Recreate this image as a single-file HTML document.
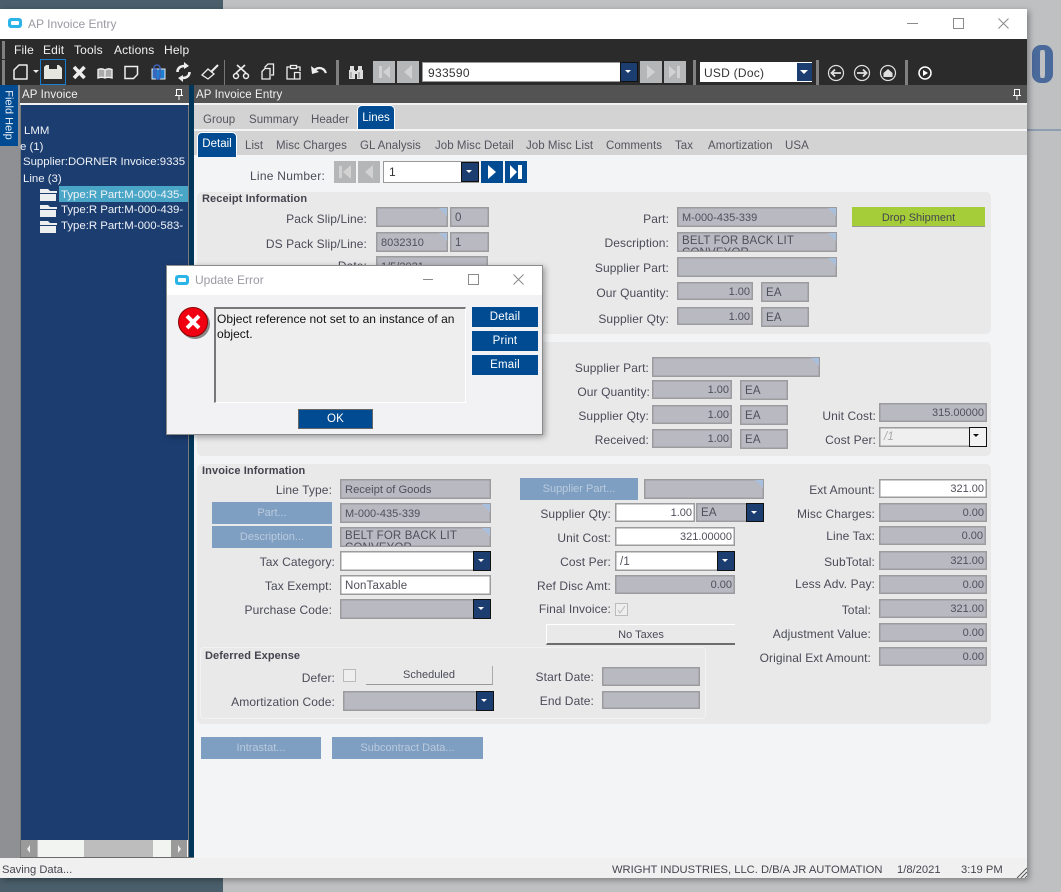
<!DOCTYPE html>
<html><head><meta charset="utf-8"><title>AP Invoice Entry</title>
<style>
html,body{margin:0;padding:0}
body{width:1061px;height:892px;position:relative;overflow:hidden;background:#bfc0c2;font:12px "Liberation Sans",sans-serif;color:#4b4b58}
div,span,svg{position:absolute}
.l,.f,.b,.t,.h{white-space:nowrap}
.l{line-height:16px;color:#4b4b58;letter-spacing:.1px}
.f{box-sizing:border-box;background:#b9b9c2;border:1px solid #9c9c9f;box-shadow:inset 0 0 0 .5px #9c9c9f;padding:0 4px;color:#50505c;line-height:20px;overflow:hidden;font-size:11.5px;letter-spacing:.15px}
.r{text-align:right;font-size:11px;letter-spacing:0;padding-right:2px}
.s{font-size:11px;letter-spacing:0}
.m{white-space:normal;line-height:12px;padding-top:2px}
.w{background:#fff}
.c::after{content:"";position:absolute;right:-1px;top:-1px;border-style:solid;border-width:0 10px 10px 0;border-color:transparent #a9c0dd transparent transparent}
.b{box-sizing:border-box;background:#004b91;color:#fff;text-align:center;letter-spacing:.2px;font-size:11.5px}
.d{background:#7f9fc2;color:#b9cade;text-align:center;box-sizing:border-box;font-size:11px;white-space:nowrap}
.dd{box-sizing:border-box;background:#1c3d70;border:1.5px solid #111;width:18px;height:20px}
.dd::after{content:"";position:absolute;left:4px;top:7px;border-style:solid;border-width:3px 3.5px 0;border-color:#fff transparent transparent}
.p{background:#e9e9ea;border-radius:5px}
.h{font-weight:bold;font-size:11px;color:#44444e;line-height:14px;letter-spacing:.1px}
.t{line-height:16px;color:#55555f;font-size:11.5px;letter-spacing:.05px}
.tree{color:#eef1f6;font-size:11.4px;line-height:16px;white-space:nowrap}
.n{width:22px;height:22px;background:#b5b6b8}
.na{width:22px;height:22px;background:#004b91}
.sep{width:3px;background:#808080}
.st{top:862px;font-size:11.2px;line-height:16px;color:#45454f;white-space:nowrap}
</style></head><body>

<!-- desktop background -->
<div style="left:0;top:0;width:223px;height:892px;background:#4a5f6b"></div>
<div style="left:223px;top:0;width:838px;height:892px;background:#bfc0c2"></div>
<div style="left:1027px;top:129px;width:34px;height:2px;background:#8f9db3"></div>
<div style="left:1032px;top:45px;width:5px;height:28px;border:solid #4a6a9c;border-width:5px 8px;border-radius:9px"></div>

<!-- window -->
<div style="left:0;top:9px;width:1027px;height:869px;background:#f3f4f6;box-shadow:2px 2px 6px rgba(0,0,0,.35)"></div>
<div style="left:0;top:9px;width:1027px;height:30px;background:#fff"></div>
<div style="left:8px;top:18px;width:14px;height:10px;background:#2ab4e8;border-radius:3px"></div>
<div style="left:11px;top:21px;width:8px;height:4px;background:#fff;border-radius:1px"></div>
<div style="left:28px;top:16px;line-height:16px;color:#9a9aa2">AP Invoice Entry</div>
<div style="left:907px;top:23px;width:11px;height:1px;background:#8a8a8a"></div>
<div style="left:953px;top:18px;width:9px;height:9px;border:1px solid #8a8a8a"></div>
<svg style="left:998px;top:18px" width="11" height="11"><path d="M.5.5l10 10M10.500.5l-10 10" stroke="#8a8a8a" fill="none"/></svg>

<!-- menu + toolbar -->
<div style="left:0;top:39px;width:1027px;height:46px;background:#2b2b2b"></div>
<div style="left:2px;top:41px;width:3px;height:18px;background:#808080"></div>
<div style="left:2px;top:60px;width:3px;height:25px;background:#808080"></div>
<div style="left:14px;top:42px;color:#f2f2f2;line-height:16px;letter-spacing:.15px">File</div>
<div style="left:43px;top:42px;color:#f2f2f2;line-height:16px;letter-spacing:.15px">Edit</div>
<div style="left:74px;top:42px;color:#f2f2f2;line-height:16px;letter-spacing:.15px">Tools</div>
<div style="left:114px;top:42px;color:#f2f2f2;line-height:16px;letter-spacing:.15px">Actions</div>
<div style="left:164px;top:42px;color:#f2f2f2;line-height:16px;letter-spacing:.15px">Help</div>

<svg style="left:0;top:55px" width="370" height="32" fill="none" stroke="#eee" stroke-width="1.500">
 <path d="M14 24V15l5-5h8v14z" stroke-linejoin="round"/>
 <path d="M33 15h6l-3 3z" fill="#eee" stroke="none"/>
 <path d="M46 10h3v4h8v-4h2l3 3v11H44V12z" fill="#e6e6e0" stroke="none"/>
 <path d="M74 12l10.500 11M84.500 12L74 23" stroke-width="3.500"/>
 <path d="M98 14.500c3-1 5-1 7 .5 2-1.500 4-1.500 7-.5v8.500c-3-1-5-1-7 0-2-1-4-1-7 0zM105 15v8" stroke-width="1.400" fill="#aaa"/>
 <path d="M125 11.500h12.500v8l-4 4H125z"/>
 <path d="M152 14h13v10h-13z" fill="#1e7fd0" stroke="#eee" stroke-width="1"/>
 <path d="M154 22V13c0-4 6-4 6 0v9c0 3-4 3-4 0v-9" stroke="#3e62b8" stroke-width="1.600"/>
 <path d="M177.500 17c0-4 3-6 7-6M189.500 17c0 4-3 6-7 6" stroke-width="2.600"/><path d="M184 7l5 4-5 3zM183 27l-5-4 5-3z" fill="#eee" stroke="none"/>
 <path d="M218 10l-7 7" stroke-width="2"/><path d="M202 20l6-6 6 5-6 5z" stroke-width="1.300"/>
 <path d="M236 18l9-8M246 18l-9-8" stroke-width="1.600"/><circle cx="236" cy="21" r="2.500"/><circle cx="246" cy="21" r="2.500"/>
 <path d="M265 13v-1l3-3h5.500v11H271M262 16.500l3-3h5v10.500h-8z" stroke-width="1.300"/>
 <path d="M290 12h-3v12h7M297 12h3v4M290.500 10.500h6v3h-6zM294.500 17.500h5.500v6.500h-5.500z" stroke-width="1.300"/>
 <path d="M313 17c3-5 10-6 13 1" stroke-width="2.200"/><path d="M311 11l1 8 7-2z" fill="#eee" stroke="none"/>
 <path d="M349 15h6v9h-6zM357 15h6v9h-6zM350 11h4v4h-4zM358 11h4v4h-4zM355 16h2v3h-2z" fill="#ddd" stroke="none"/>
 <path d="M351 17v6M359 17v6" stroke="#888" stroke-width="1"/>
</svg>
<div style="left:40px;top:59px;width:26px;height:26px;box-sizing:border-box;border:1px solid #1a7fd0"></div>
<div class="sep" style="left:224px;top:60px;height:25px;width:1px;background:#777"></div>
<div class="sep" style="left:336px;top:60px;height:25px"></div>

<!-- search nav -->
<div class="n" style="left:373px;top:61px"></div>
<svg style="left:373px;top:61px" width="22" height="22"><path d="M6 5h3v12H6zM17 5v12l-7-6z" fill="#d2d2d2"/></svg>
<div class="n" style="left:397px;top:61px"></div>
<svg style="left:397px;top:61px" width="22" height="22"><path d="M15 4v14l-8-7z" fill="#d2d2d2"/></svg>
<div style="left:422px;top:62px;width:216px;height:20px;background:#fff;box-sizing:border-box;border:1px solid #999"></div>
<div style="left:428px;top:66px;color:#333;line-height:15px;letter-spacing:.3px">933590</div>
<div class="dd" style="left:620px;top:62px"></div>
<div class="n" style="left:640px;top:61px"></div>
<svg style="left:640px;top:61px" width="22" height="22"><path d="M7 4v14l8-7z" fill="#d2d2d2"/></svg>
<div class="n" style="left:664px;top:61px"></div>
<svg style="left:664px;top:61px" width="22" height="22"><path d="M5 5v12l7-6zM13 5h3v12h-3z" fill="#d2d2d2"/></svg>
<div class="sep" style="left:693px;top:60px;height:25px"></div>
<div style="left:700px;top:62px;width:112px;height:20px;background:#fff"></div>
<div style="left:704px;top:66px;color:#333;line-height:15px;letter-spacing:.25px">USD (Doc)</div>
<div style="left:797px;top:63px;width:15px;height:18px;background:#1c3d70"></div>
<div style="left:800px;top:70px;border-style:solid;border-width:4px 4.500px 0;border-color:#fff transparent transparent"></div>
<div class="sep" style="left:816px;top:60px;height:25px"></div>
<svg style="left:826px;top:62px" width="110" height="22" fill="none" stroke="#e0e0e0" stroke-width="1.200">
 <circle cx="10" cy="11" r="7.500"/><path d="M15 11H6M9 7.500L5.500 11 9 14.500" stroke-width="1.800"/>
 <circle cx="36" cy="11" r="7.500"/><path d="M31 11h9M37 7.500l3.500 3.500-3.500 3.500" stroke-width="1.800"/>
 <circle cx="62" cy="11" r="7.500"/><path d="M57.500 11l4.500-4 4.500 4v4h-9z" fill="#e0e0e0" stroke="none"/>
 <circle cx="99" cy="11" r="6" stroke="#fff" stroke-width="1.500"/><path d="M97 8v6l5-3z" fill="#fff" stroke="none"/>
</svg>
<div class="sep" style="left:905px;top:60px;height:25px"></div>

<!-- panel headers -->
<div style="left:0;top:85px;width:1027px;height:18px;background:#535353"></div>
<div style="left:0;top:103px;width:1027px;height:2px;background:#f2f2f2"></div>
<div style="left:0;top:85px;width:20px;height:773px;background:#8e9093"></div>
<div style="left:20px;top:85px;width:169px;height:18px;background:#535353"></div>
<div style="left:22px;top:87px;color:#f0f0f0;line-height:16px;font-size:11.5px;letter-spacing:.1px">AP Invoice</div>
<div style="left:196px;top:87px;color:#f0f0f0;line-height:16px;font-size:11.500px;letter-spacing:.1px">AP Invoice Entry</div>
<svg style="left:175px;top:89px" width="8" height="11"><path d="M1.500.5h5v6h-5zM0 6.500h8M4 7v4" fill="none" stroke="#fff"/></svg>
<svg style="left:1013px;top:89px" width="8" height="11"><path d="M1.500.5h5v6h-5zM0 6.500h8M4 7v4" fill="none" stroke="#fff"/></svg>

<!-- field help -->
<div style="left:0;top:85px;width:18px;height:61px;background:#004b91"></div>
<div style="left:-22px;top:107px;width:61px;height:16px;text-align:center;transform:rotate(90deg);color:#e8eef6;font-size:11px;line-height:16px;white-space:nowrap">Field Help</div>

<!-- tree -->
<div style="left:20px;top:105px;width:169px;height:735px;background:#1c3d70"></div>
<div style="left:189px;top:85px;width:5px;height:773px;background:#00365a"></div>
<div style="left:188px;top:105px;width:1px;height:752px;background:#7a7a7a"></div>
<div style="left:20px;top:105px;width:1px;height:752px;background:#7a7a7a"></div>
<div class="tree" style="left:24px;top:123px">LMM</div>
<div class="tree" style="left:20px;top:139px;width:30px;overflow:hidden"><span style="position:static">e (1)</span></div>
<div class="tree" style="left:23px;top:154px">Supplier:DORNER Invoice:9335</div>
<div class="tree" style="left:23px;top:171px">Line (3)</div>
<div style="left:59px;top:186px;width:129px;height:16px;background:#4aa6c6"></div>
<div class="tree" style="left:61px;top:187px">Type:R Part:M-000-435-</div>
<div class="tree" style="left:61px;top:202px">Type:R Part:M-000-439-</div>
<div class="tree" style="left:61px;top:218px">Type:R Part:M-000-583-</div>
<svg style="left:40px;top:188px" width="17" height="46" fill="#eceef0">
 <path d="M0 1h8l2 2h7v2H0zM0 6h16v7H0zM0 17h8l2 2h7v2H0zM0 22h16v7H0zM0 33h8l2 2h7v2H0zM0 38h16v7H0z"/>
</svg>
<!-- scroll -->
<div style="left:21px;top:840px;width:166px;height:17px;background:#bdbdbd"></div>
<div style="left:21px;top:840px;width:16px;height:17px;background:#9a9a9a"></div>
<div style="left:171px;top:840px;width:16px;height:17px;background:#9a9a9a"></div>
<div style="left:38px;top:840px;width:46px;height:17px;background:#f2f4f2"></div>
<div style="left:153px;top:840px;width:18px;height:17px;background:#f2f4f2"></div>
<div style="left:27px;top:845px;border-style:solid;border-width:4px 3px 4px 0;border-color:transparent #eee transparent transparent"></div>
<div style="left:178px;top:845px;border-style:solid;border-width:4px 0 4px 3px;border-color:transparent transparent transparent #eee"></div>
<div style="left:20px;top:857px;width:174px;height:1px;background:#6a6a6a"></div>

<!-- tabs -->
<div style="left:194px;top:105px;width:833px;height:24px;background:#d3d3d3"></div>
<div style="left:194px;top:129px;width:833px;height:2px;background:#f4f4f4"></div>
<div style="left:194px;top:131px;width:833px;height:24px;background:#d3d3d3"></div>
<div class="t" style="left:203px;top:112px">Group</div>
<div class="t" style="left:249px;top:112px">Summary</div>
<div class="t" style="left:311px;top:112px">Header</div>
<div style="left:357px;top:105px;width:38px;height:24px;box-sizing:border-box;background:#004b91;border:1px solid #fff;border-bottom:0;border-radius:5px 5px 0 0;color:#fff;text-align:center;line-height:24px;font-size:11.500px">Lines</div>
<div style="left:197px;top:132px;width:40px;height:25px;box-sizing:border-box;background:#004b91;border:1px solid #fff;border-bottom:0;border-radius:5px 5px 0 0;color:#fff;text-align:center;line-height:22px;font-size:11.500px">Detail</div>
<div class="t" style="left:245px;top:138px">List</div>
<div class="t" style="left:276px;top:138px">Misc Charges</div>
<div class="t" style="left:360px;top:138px">GL Analysis</div>
<div class="t" style="left:435px;top:138px">Job Misc Detail</div>
<div class="t" style="left:526px;top:138px">Job Misc List</div>
<div class="t" style="left:606px;top:138px">Comments</div>
<div class="t" style="left:675px;top:138px">Tax</div>
<div class="t" style="left:708px;top:138px">Amortization</div>
<div class="t" style="left:785px;top:138px">USA</div>

<!-- line number -->
<div class="l" style="left:250px;top:168px;letter-spacing:.25px">Line Number:</div>
<div class="n" style="left:334px;top:161px"></div>
<svg style="left:334px;top:161px" width="22" height="22"><path d="M5 5h3v12H5zM17 4v14l-8-7z" fill="#d2d2d2"/></svg>
<div class="n" style="left:358px;top:161px"></div>
<svg style="left:358px;top:161px" width="22" height="22"><path d="M15 4v14l-8-7z" fill="#d2d2d2"/></svg>
<div style="left:383px;top:161px;width:96px;height:22px;box-sizing:border-box;background:#fff;border:1px solid #999;padding-left:5px;line-height:20px;color:#333">1</div>
<div class="dd" style="left:461px;top:162px"></div>
<div class="na" style="left:481px;top:161px"></div>
<svg style="left:481px;top:161px" width="22" height="22"><path d="M7 4v14l8-7z" fill="#fff"/></svg>
<div class="na" style="left:505px;top:161px"></div>
<svg style="left:505px;top:161px" width="22" height="22"><path d="M5 4v14l7-7zM13 4h4v14h-4z" fill="#fff"/></svg>

<!-- Receipt Information -->
<div class="p" style="left:197px;top:192px;width:794px;height:142px"></div>
<div class="h" style="left:202px;top:192px">Receipt Information</div>
<div class="l" style="right:694px;top:211px">Pack Slip/Line:</div>
<div class="f c" style="left:376px;top:207px;width:72px;height:20px"></div>
<div class="f" style="left:450px;top:207px;width:39px;height:20px">0</div>
<div class="l" style="right:694px;top:236px">DS Pack Slip/Line:</div>
<div class="f c s" style="left:376px;top:232px;width:72px;height:20px">8032310</div>
<div class="f" style="left:450px;top:232px;width:39px;height:20px">1</div>
<div class="l" style="right:694px;top:258px">Date:</div>
<div class="f s" style="left:376px;top:256px;width:112px;height:20px">1/5/2021</div>
<div class="l" style="right:392px;top:211px">Part:</div>
<div class="f c s" style="left:677px;top:207px;width:160px;height:20px">M-000-435-339</div>
<div class="l" style="right:392px;top:235px">Description:</div>
<div class="f c m" style="left:677px;top:232px;width:160px;height:20px">BELT FOR BACK LIT CONVEYOR</div>
<div class="l" style="right:392px;top:260px">Supplier Part:</div>
<div class="f c" style="left:677px;top:257px;width:160px;height:20px"></div>
<div class="l" style="right:392px;top:285px">Our Quantity:</div>
<div class="f r" style="left:677px;top:282px;width:76px;height:18px;line-height:18px">1.00</div>
<div class="f" style="left:761px;top:282px;width:48px;height:20px">EA</div>
<div class="l" style="right:392px;top:311px">Supplier Qty:</div>
<div class="f r" style="left:677px;top:307px;width:76px;height:18px;line-height:18px">1.00</div>
<div class="f" style="left:761px;top:307px;width:48px;height:20px">EA</div>
<div style="left:852px;top:207px;width:133px;height:20px;box-sizing:border-box;background:#a4cd39;border-bottom:1px solid #999;text-align:center;line-height:22px;color:#45454f;font-size:11px">Drop Shipment</div>

<!-- Middle panel -->
<div class="p" style="left:197px;top:342px;width:794px;height:114px"></div>
<div class="l" style="right:412px;top:360px">Supplier Part:</div>
<div class="f c" style="left:652px;top:357px;width:168px;height:20px"></div>
<div class="l" style="right:411px;top:384px">Our Quantity:</div>
<div class="f r" style="left:652px;top:380px;width:80px;height:19px;line-height:19px">1.00</div>
<div class="f" style="left:740px;top:380px;width:48px;height:20px">EA</div>
<div class="l" style="right:412px;top:408px">Supplier Qty:</div>
<div class="f r" style="left:652px;top:405px;width:80px;height:19px;line-height:19px">1.00</div>
<div class="f" style="left:740px;top:405px;width:48px;height:20px">EA</div>
<div class="l" style="right:412px;top:432px">Received:</div>
<div class="f r" style="left:652px;top:429px;width:80px;height:19px;line-height:19px">1.00</div>
<div class="f" style="left:740px;top:429px;width:48px;height:20px">EA</div>
<div class="l" style="right:185px;top:408px">Unit Cost:</div>
<div class="f r" style="left:879px;top:403px;width:108px;height:19px;line-height:19px">315.00000</div>
<div class="l" style="right:185px;top:432px">Cost Per:</div>
<div class="f" style="left:879px;top:427px;width:108px;height:20px;background:#efefef;color:#aaa;font-style:italic;line-height:18px">/1</div>
<div class="dd" style="left:969px;top:427px;background:#f2f2f2"></div>
<div style="left:973px;top:434px;border-style:solid;border-width:3px 3.500px 0;border-color:#111 transparent transparent"></div>

<!-- Invoice Information -->
<div class="p" style="left:197px;top:464px;width:794px;height:260px"></div>
<div class="h" style="left:202px;top:464px">Invoice Information</div>
<div class="l" style="right:729px;top:482px">Line Type:</div>
<div class="f" style="left:340px;top:479px;width:151px;height:20px;font-size:11.2px;letter-spacing:0">Receipt of Goods</div>
<div class="d" style="left:212px;top:502px;width:120px;height:22px;line-height:23px">Part...</div>
<div class="f c s" style="left:340px;top:503px;width:151px;height:20px">M-000-435-339</div>
<div class="d" style="left:212px;top:526px;width:120px;height:22px;line-height:23px">Description...</div>
<div class="f c m" style="left:340px;top:527px;width:151px;height:20px">BELT FOR BACK LIT CONVEYOR</div>
<div class="l" style="right:726px;top:554px">Tax Category:</div>
<div class="f w" style="left:340px;top:551px;width:151px;height:20px"></div>
<div class="dd" style="left:473px;top:551px"></div>
<div class="l" style="right:729px;top:578px">Tax Exempt:</div>
<div class="f w" style="left:340px;top:575px;width:151px;height:20px">NonTaxable</div>
<div class="l" style="right:729px;top:602px">Purchase Code:</div>
<div class="f" style="left:340px;top:599px;width:151px;height:20px"></div>
<div class="dd" style="left:473px;top:599px"></div>

<div class="d" style="left:520px;top:478px;width:118px;height:22px;line-height:23px">Supplier Part...</div>
<div class="f c" style="left:644px;top:479px;width:120px;height:20px"></div>
<div class="l" style="right:450px;top:506px">Supplier Qty:</div>
<div class="f w r" style="left:615px;top:503px;width:80px;height:19px;line-height:19px">1.00</div>
<div class="f" style="left:696px;top:503px;width:68px;height:19px;line-height:18px">EA</div>
<div class="dd" style="left:746px;top:503px;height:19px"></div>
<div class="l" style="right:450px;top:530px">Unit Cost:</div>
<div class="f w r" style="left:615px;top:527px;width:120px;height:19px;line-height:19px">321.00000</div>
<div class="l" style="right:450px;top:554px">Cost Per:</div>
<div class="f w" style="left:615px;top:551px;width:120px;height:20px">/1</div>
<div class="dd" style="left:717px;top:551px"></div>
<div class="l" style="right:450px;top:578px">Ref Disc Amt:</div>
<div class="f r" style="left:615px;top:575px;width:120px;height:19px;line-height:19px">0.00</div>
<div class="l" style="right:450px;top:601px">Final Invoice:</div>
<div style="left:615px;top:603px;width:13px;height:13px;box-sizing:border-box;border:1px solid #bbb;background:#eee"></div>
<svg style="left:616px;top:604px" width="11" height="11"><path d="M2 6l2 3 5-7" stroke="#bbb" fill="none"/></svg>
<div style="left:546px;top:624px;width:189px;height:21px;box-sizing:border-box;border-top:1px solid #fff;border-left:1px solid #fff;border-bottom:2px solid #6c6c6c;text-align:center;line-height:20px;color:#4b4b58;font-size:11px">No Taxes</div>

<div class="l" style="right:186px;top:482px">Ext Amount:</div>
<div class="f w r" style="left:879px;top:479px;width:108px;height:19px;line-height:19px">321.00</div>
<div class="l" style="right:186px;top:506px">Misc Charges:</div>
<div class="f r" style="left:879px;top:503px;width:108px;height:19px;line-height:19px">0.00</div>
<div class="l" style="right:186px;top:528px">Line Tax:</div>
<div class="f r" style="left:879px;top:526px;width:107px;height:19px;line-height:19px">0.00</div>
<div class="l" style="right:186px;top:554px">SubTotal:</div>
<div class="f r" style="left:879px;top:551px;width:108px;height:19px;line-height:19px">321.00</div>
<div class="l" style="right:186px;top:576px">Less Adv. Pay:</div>
<div class="f r" style="left:879px;top:575px;width:108px;height:19px;line-height:19px">0.00</div>
<div class="l" style="right:190px;top:602px">Total:</div>
<div class="f r" style="left:879px;top:599px;width:108px;height:19px;line-height:19px">321.00</div>
<div class="l" style="right:190px;top:626px">Adjustment Value:</div>
<div class="f r" style="left:879px;top:623px;width:108px;height:19px;line-height:19px">0.00</div>
<div class="l" style="right:190px;top:650px">Original Ext Amount:</div>
<div class="f r" style="left:879px;top:647px;width:108px;height:19px;line-height:19px">0.00</div>

<!-- Deferred -->
<div style="left:200px;top:647px;width:506px;height:72px;box-sizing:border-box;border:1px solid #f2f2f4;border-radius:4px"></div>
<div class="h" style="left:205px;top:649px">Deferred Expense</div>
<div class="l" style="right:726px;top:670px">Defer:</div>
<div style="left:343px;top:669px;width:13px;height:13px;box-sizing:border-box;border:1px solid #bbb;background:#efeff0"></div>
<div style="left:366px;top:666px;width:127px;height:19px;box-sizing:border-box;border-right:1px solid #aaa;border-bottom:1px solid #999;text-align:center;line-height:18px;color:#4b4b58;font-size:11px">Scheduled</div>
<div class="l" style="right:726px;top:694px">Amortization Code:</div>
<div class="f" style="left:343px;top:691px;width:150px;height:20px"></div>
<div class="dd" style="left:476px;top:691px"></div>
<div class="l" style="right:467px;top:669px">Start Date:</div>
<div class="f" style="left:602px;top:667px;width:98px;height:19px"></div>
<div class="l" style="right:467px;top:693px">End Date:</div>
<div class="f" style="left:602px;top:691px;width:98px;height:18px"></div>

<div class="d" style="left:201px;top:737px;width:120px;height:22px;line-height:23px">Intrastat...</div>
<div class="d" style="left:332px;top:737px;width:151px;height:22px;line-height:23px">Subcontract Data...</div>

<!-- status -->
<div style="left:0;top:858px;width:1027px;height:20px;background:#f0f0f0"></div>
<div class="st" style="left:2px">Saving Data...</div>
<div class="st" style="left:612px;font-size:11.2px">WRIGHT INDUSTRIES, LLC. D/B/A JR AUTOMATION</div>
<div class="st" style="left:897px">1/8/2021</div>
<div class="st" style="left:961px">3:19 PM</div>
<svg style="left:1016px;top:867px" width="11" height="11"><path d="M1 11L11 1M5 11l6-6M9 11l2-2" stroke="#555" fill="none"/></svg>

<!-- dialog -->
<div style="left:166px;top:265px;width:377px;height:170px;box-sizing:border-box;background:#f2f2f4;border:1px solid #8c8c8c;box-shadow:2px 2px 6px rgba(0,0,0,.35)"></div>
<div style="left:167px;top:266px;width:375px;height:29px;background:#fff"></div>
<div style="left:175px;top:275px;width:14px;height:10px;background:#2ab4e8;border-radius:3px"></div>
<div style="left:178px;top:278px;width:8px;height:4px;background:#fff;border-radius:1px"></div>
<div style="left:195px;top:272px;line-height:16px;color:#9a9aa2">Update Error</div>
<div style="left:423px;top:279px;width:10px;height:1px;background:#8a8a8a"></div>
<div style="left:468px;top:274px;width:9px;height:9px;border:1px solid #8a8a8a"></div>
<svg style="left:513px;top:274px" width="11" height="11"><path d="M.5.5l10 10M10.500.5l-10 10" stroke="#8a8a8a" fill="none"/></svg>
<div style="left:180px;top:309px;width:30px;height:30px;border-radius:50%;background:#888"></div>
<div style="left:178px;top:307px;width:30px;height:30px;border-radius:50%;background:#f00010;box-sizing:border-box;border:1px solid #800"></div>
<svg style="left:178px;top:307px" width="30" height="30"><path d="M9 9l12 12M21 9L9 21" stroke="#fff" stroke-width="4"/></svg>
<div style="left:214px;top:307px;width:252px;height:96px;box-sizing:border-box;background:#eeeeef;border:1px solid #fff;border-top:2px solid #777;border-left:2px solid #777;padding:3px 1px;color:#111;font-size:12px;line-height:15px;white-space:normal;letter-spacing:.03px">Object reference not set to an instance of an object.</div>
<div class="b" style="left:472px;top:307px;width:66px;height:20px;line-height:21px">Detail</div>
<div class="b" style="left:472px;top:331px;width:66px;height:20px;line-height:21px">Print</div>
<div class="b" style="left:472px;top:355px;width:66px;height:20px;line-height:21px">Email</div>
<div class="b" style="left:298px;top:409px;width:75px;height:20px;line-height:19px;border:1px solid #666">OK</div>

</body></html>
